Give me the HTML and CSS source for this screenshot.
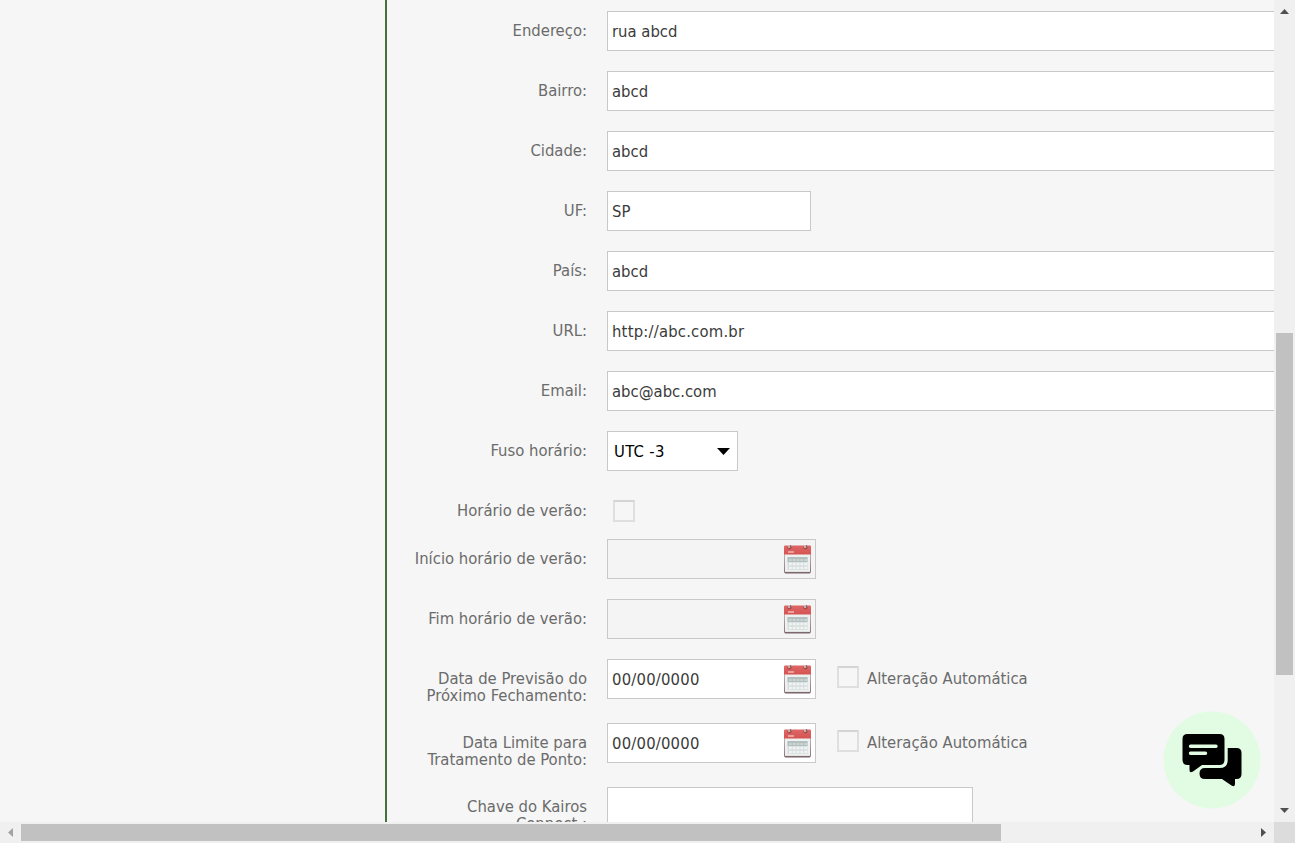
FILE: index.html
```html
<!DOCTYPE html>
<html lang="pt-BR">
<head>
<meta charset="utf-8">
<title>Empresa</title>
<link rel="stylesheet" href="styles.css">
</head>
<body>
<svg class="defs" width="0" height="0">
  <defs>
    <linearGradient id="red" x1="0" y1="0" x2="0" y2="1"><stop offset="0" stop-color="#dc6866"/><stop offset="1" stop-color="#d65353"/></linearGradient>
    <linearGradient id="edge" x1="0" y1="0" x2="0" y2="1"><stop offset="0" stop-color="#d2c4c4"/><stop offset="1" stop-color="#8a7478"/></linearGradient>
    <symbol id="calendar" viewBox="0 0 27 30">
      <rect x="0.5" y="5" width="26" height="24" rx="1" fill="#edf1ef" stroke="url(#edge)"/>
      <path d="M1 28.500h25" stroke="#7c686c" stroke-width="1.200"/>
      <path d="M0 10.500V2.500q0-1 1-1h25q1 0 1 1v8z" fill="url(#red)"/>
      <path d="M4 8h6" stroke="#efb3b1" stroke-width="1.600"/>
      <rect x="3.500" y="13" width="20" height="13" fill="#d6dedd"/>
      <rect x="3.500" y="13" width="20" height="5" fill="#b4c0c0"/>
      <path d="M5 16h18" stroke="#c9d4d3" stroke-width="2" stroke-dasharray="2.800 1"/>
      <path d="M5 20h18M5 24h18" stroke="#f0f4f3" stroke-width="2.400" stroke-dasharray="2.800 1"/>
      <ellipse cx="5.500" cy="3.800" rx="2.200" ry="1.800" fill="#a94a4b"/>
      <ellipse cx="21.500" cy="3.800" rx="2.200" ry="1.800" fill="#a94a4b"/>
      <path d="M5 1v3M21 1v3" stroke="#cfc5c5" stroke-width="1.600"/>
      <path d="M6.500 1v3M22.500 1v3" stroke="#826a6c"/>
    </symbol>
  </defs>
</svg>
<div class="window">
  <div class="viewport">
    <aside class="side"></aside>
    <main class="form">
      <div class="row"><label class="label">Endereço:</label><div class="field wide">rua abcd</div></div>
      <div class="row"><label class="label">Bairro:</label><div class="field wide">abcd</div></div>
      <div class="row"><label class="label">Cidade:</label><div class="field wide">abcd</div></div>
      <div class="row"><label class="label">UF:</label><div class="field short">SP</div></div>
      <div class="row"><label class="label">País:</label><div class="field wide">abcd</div></div>
      <div class="row"><label class="label">URL:</label><div class="field wide url">http://abc.com.br</div></div>
      <div class="row"><label class="label">Email:</label><div class="field wide">abc@abc.com</div></div>
      <div class="row"><label class="label">Fuso horário:</label><div class="field select"><span>UTC -3</span><svg width="13" height="7" viewBox="0 0 13 7"><path d="M0 0h13L6.500 7z"/></svg></div></div>
      <div class="row check-row"><label class="label">Horário de verão:</label><span class="check"></span></div>
      <div class="row"><label class="label">Início horário de verão:</label><div class="field date disabled"><svg class="cal"><use href="#calendar"/></svg></div></div>
      <div class="row"><label class="label">Fim horário de verão:</label><div class="field date disabled"><svg class="cal"><use href="#calendar"/></svg></div></div>
      <div class="row tall"><label class="label">Data de Previsão do<br>Próximo Fechamento:</label><div class="field date"><span>00/00/0000</span><svg class="cal"><use href="#calendar"/></svg></div><span class="check auto"></span><span class="auto-text">Alteração Automática</span></div>
      <div class="row tall"><label class="label">Data Limite para<br>Tratamento de Ponto:</label><div class="field date"><span>00/00/0000</span><svg class="cal"><use href="#calendar"/></svg></div><span class="check auto"></span><span class="auto-text">Alteração Automática</span></div>
      <div class="row"><label class="label">Chave do Kairos<br>Connect :</label><div class="field key"></div></div>
    </main>
  </div>
  <div class="vbar">
    <svg class="up" width="9" height="5" viewBox="0 0 9 5"><path d="M0 5L4.500 0 9 5z"/></svg>
    <div class="vthumb"></div>
    <svg class="down" width="9" height="5" viewBox="0 0 9 5"><path d="M0 0h9L4.500 5z"/></svg>
  </div>
  <div class="hbar">
    <svg class="left" width="5" height="9" viewBox="0 0 5 9"><path d="M5 0v9L0 4.500z"/></svg>
    <div class="hthumb"></div>
    <svg class="right" width="5" height="9" viewBox="0 0 5 9"><path d="M0 0l5 4.500L0 9z"/></svg>
  </div>
  <div class="corner"></div>
</div>
<svg class="chat" viewBox="1163 711 98 98">
  <circle cx="1212" cy="760" r="48.500" fill="#e1fce2"/>
  <path d="M1187.500 734h32q5 0 5 5v21q0 5-5 5h-17.500l-9 6.500q-3.500 2-3.500-1.500v-5h-2q-5 0-5-5v-21q0-5 5-5z"/>
  <path d="M1227.700 748h8.800q5 0 5 5v21q0 5-5 5h-1.500v5q0 3.300-3.500 1.500l-9.500-6.500h-17q-5.500 0-5.500-5.500t5.500-5.500h14.700q8 0 8-8z"/>
  <path d="M1190.500 746.200h25.500M1190.500 753.200h15" fill="none" stroke="#e1fce2" stroke-width="3.400" stroke-linecap="round"/>
</svg>
</body>
</html>
```
FILE: styles.css
```css
* { box-sizing: border-box; }
body {
  margin: 0;
  overflow: hidden;
  background: #f6f6f6;
  color: #6b6b6b;
  font: 16.5px/17px Tahoma, "DejaVu Sans Condensed", "DejaVu Sans", sans-serif;
  font-stretch: condensed;
  letter-spacing: 0;
}
.defs { position: absolute; }
.window {
  display: grid;
  grid-template-columns: 1274px 21px;
  grid-template-rows: 822px 21px;
  width: 1295px;
  height: 843px;
}
.viewport { display: flex; overflow: hidden; }
.side { flex: 0 0 387px; border-right: 2px solid #477040; }
.form { flex: 0 0 auto; width: 1200px; padding-top: 11px; }
.row { display: flex; align-items: flex-start; height: 60px; }
.check-row { height: 48px; }
.tall { height: 64px; }
.label { width: 200px; margin-right: 20px; padding-top: 11px; text-align: right; white-space: nowrap; }
.field {
  display: flex;
  align-items: center;
  height: 40px;
  padding: 1px 0 0 4px;
  border: 1px solid #c9c9c9;
  background: #fff;
  color: #3b3b3b;
}
.wide { width: 800px; }
.url { letter-spacing: 0.2px; }
.short { width: 204px; }
.key { width: 366px; }
.select { justify-content: space-between; width: 131px; padding: 1px 7px 0 6px; color: #000; letter-spacing: 0.3px; }
.date { justify-content: space-between; width: 209px; padding: 0 4px; letter-spacing: 0.2px; }
.disabled { justify-content: flex-end; background: #f4f4f4; }
.cal { width: 27px; height: 30px; }
.check { width: 22px; height: 22px; margin: 9px 0 0 6px; border: 2px solid #dfdfdf; border-top-color: #d4d4d4; }
.auto { margin: 7px 8px 0 21px; }
.auto-text { padding-top: 11px; }
.vbar { display: flex; flex-direction: column; align-items: center; background: #f0f0f0; fill: #505050; }
.up { margin-top: 9px; }
.vthumb { width: 17px; height: 342px; margin-top: 319px; background: #c1c1c1; }
.down { margin-top: 133px; }
.hbar { display: flex; align-items: center; background: #f0f0f0; fill: #505050; }
.left { margin-left: 8px; fill: #a3a3a3; }
.hthumb { width: 980px; height: 17px; margin-left: 8px; background: #c1c1c1; }
.right { margin-left: 260px; }
.corner { background: #dcdcdc; }
.chat { position: absolute; left: 1163px; top: 711px; width: 98px; height: 98px; }
```
